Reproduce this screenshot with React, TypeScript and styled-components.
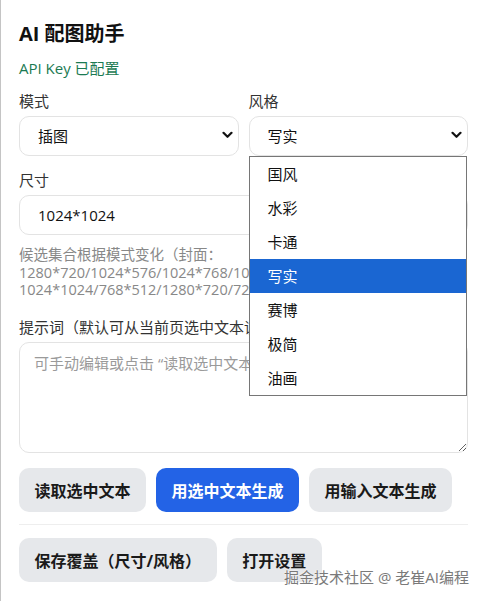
import React from "react";
import styled, { createGlobalStyle } from "styled-components";

const GlobalStyle = createGlobalStyle`
  html, body { margin: 0; padding: 0; background: #ffffff; }
  body { font-family: "Open Sans", "Noto Sans CJK SC", sans-serif; color: #1f1f1f; }
  * { box-sizing: border-box; }
`;

const Page = styled.div`
  position: relative;
  width: 486px;
  height: 601px;
  overflow: hidden;
  border-left: 1px solid #c4c4c4;
  padding: 20px 18px 0 18px;
  background: #fff;
`;

const Title = styled.h1`
  margin: 0;
  font-size: 20px;
  line-height: 27px;
  font-weight: 700;
  color: #111;
`;

const Status = styled.div`
  margin-top: 11px;
  font-size: 15px;
  line-height: 21px;
  color: #1b7a52;
`;

const Row = styled.div<{ $mt: number }>`
  display: grid;
  grid-template-columns: 1fr 1fr;
  column-gap: 10px;
  margin-top: ${(p) => p.$mt}px;
`;

const Field = styled.div<{ $mt?: number }>`
  display: flex;
  flex-direction: column;
  margin-top: ${(p) => p.$mt ?? 0}px;
`;

const Label = styled.label`
  font-size: 15px;
  line-height: 20px;
  color: #333;
  margin-bottom: 5px;
  white-space: nowrap;
`;

const SelectWrap = styled.div`
  position: relative;
  height: 40px;
`;

const NativeSelect = styled.select`
  appearance: none;
  -webkit-appearance: none;
  width: 100%;
  height: 40px;
  border: 1px solid #e3e3e3;
  border-radius: 10px;
  background: #fff;
  padding: 0 30px 0 18px;
  font-family: "Open Sans", "Noto Sans CJK SC", sans-serif;
  font-size: 15px;
  color: #111;
  outline: none;
`;

const Chevron = styled.svg`
  position: absolute;
  right: 6px;
  top: 15px;
  width: 11px;
  height: 8px;
  pointer-events: none;
`;

const Dropdown = styled.ul`
  position: absolute;
  top: 40px;
  left: 0;
  right: 1px;
  margin: 0;
  padding: 0;
  list-style: none;
  background: #fff;
  border: 1px solid #767676;
  z-index: 10;
`;

const Option = styled.li<{ $active?: boolean }>`
  height: 34px;
  line-height: 34px;
  padding-left: 18px;
  font-size: 15px;
  color: ${(p) => (p.$active ? "#fff" : "#111")};
  background: ${(p) => (p.$active ? "#1a66d2" : "#fff")};
`;

const Hint = styled.div`
  margin-top: 11px;
  font-size: 14.5px;
  line-height: 17.5px;
  color: #888;
`;

const PromptField = styled(Field)`
  margin-top: 18.5px;
`;

const TextArea = styled.textarea`
  width: 100%;
  height: 111px;
  border: 1px solid #e3e3e3;
  border-radius: 10px;
  padding: 10px 14px;
  font-family: "Open Sans", "Noto Sans CJK SC", sans-serif;
  font-size: 15px;
  line-height: 20px;
  color: #111;
  resize: vertical;
  outline: none;
  display: block;
  &::placeholder { color: #9a9a9a; }
`;

const ButtonRow = styled.div<{ $mt: number }>`
  display: flex;
  gap: 10px;
  margin-top: ${(p) => p.$mt}px;
`;

const Button = styled.button<{ $primary?: boolean }>`
  height: 44px;
  padding: 0 15.5px;
  border: none;
  border-radius: 10px;
  font-family: "Open Sans", "Noto Sans CJK SC", sans-serif;
  font-size: 16px;
  font-weight: 700;
  color: ${(p) => (p.$primary ? "#fff" : "#1a1a1a")};
  background: ${(p) => (p.$primary ? "#2363e6" : "#e6e8eb")};
  white-space: nowrap;
  cursor: pointer;
`;

const Divider = styled.hr`
  margin: 12px 0 0 0;
  border: none;
  border-top: 1px solid #eeeeee;
  height: 0;
`;

const Watermark = styled.div`
  position: absolute;
  left: 283px;
  top: 567px;
  font-size: 15px;
  line-height: 20px;
  color: #7a7a7a;
  white-space: nowrap;
  text-shadow: 0 0 2px #fff, 0 0 1px #fff;
  pointer-events: none;
`;

const ChevronIcon = () => (
  <Chevron viewBox="0 0 11 8">
    <path d="M1.5 1.8 L5.5 5.8 L9.5 1.8" fill="none" stroke="#111" strokeWidth="2.2" strokeLinecap="round" strokeLinejoin="round" />
  </Chevron>
);

const styles = ["国风", "水彩", "卡通", "写实", "赛博", "极简", "油画"];

export default function App() {
  return (
    <>
      <GlobalStyle />
      <Page>
        <Title>AI 配图助手</Title>
        <Status>API Key 已配置</Status>
        <Row $mt={12}>
          <Field>
            <Label>模式</Label>
            <SelectWrap>
              <NativeSelect defaultValue="插图">
                <option>封面</option>
                <option>插图</option>
              </NativeSelect>
              <ChevronIcon />
            </SelectWrap>
          </Field>
          <Field>
            <Label>风格</Label>
            <SelectWrap>
              <NativeSelect defaultValue="写实">
                {styles.map((s) => (
                  <option key={s}>{s}</option>
                ))}
              </NativeSelect>
              <ChevronIcon />
              <Dropdown>
                {styles.map((s) => (
                  <Option key={s} $active={s === "写实"}>
                    {s}
                  </Option>
                ))}
              </Dropdown>
            </SelectWrap>
          </Field>
        </Row>
        <Field $mt={14}>
          <Label>尺寸</Label>
          <SelectWrap>
            <NativeSelect defaultValue="1024*1024">
              <option>1024*1024</option>
              <option>768*512</option>
              <option>1280*720</option>
              <option>720*1280</option>
            </NativeSelect>
            <ChevronIcon />
          </SelectWrap>
        </Field>
        <Hint>
          候选集合根据模式变化（封面：1280*720/1024*576/1024*768/1024*1024；插图：1024*1024/768*512/1280*720/720*1280）
        </Hint>
        <PromptField>
          <Label>提示词（默认可从当前页选中文本读取）</Label>
          <TextArea placeholder="可手动编辑或点击 “读取选中文本” 自动填入" />
        </PromptField>
        <ButtonRow $mt={15}>
          <Button>读取选中文本</Button>
          <Button $primary>用选中文本生成</Button>
          <Button>用输入文本生成</Button>
        </ButtonRow>
        <Divider />
        <ButtonRow $mt={13}>
          <Button>保存覆盖（尺寸/风格）</Button>
          <Button>打开设置</Button>
        </ButtonRow>
        <Watermark>掘金技术社区 @ 老崔AI编程</Watermark>
      </Page>
    </>
  );
}
